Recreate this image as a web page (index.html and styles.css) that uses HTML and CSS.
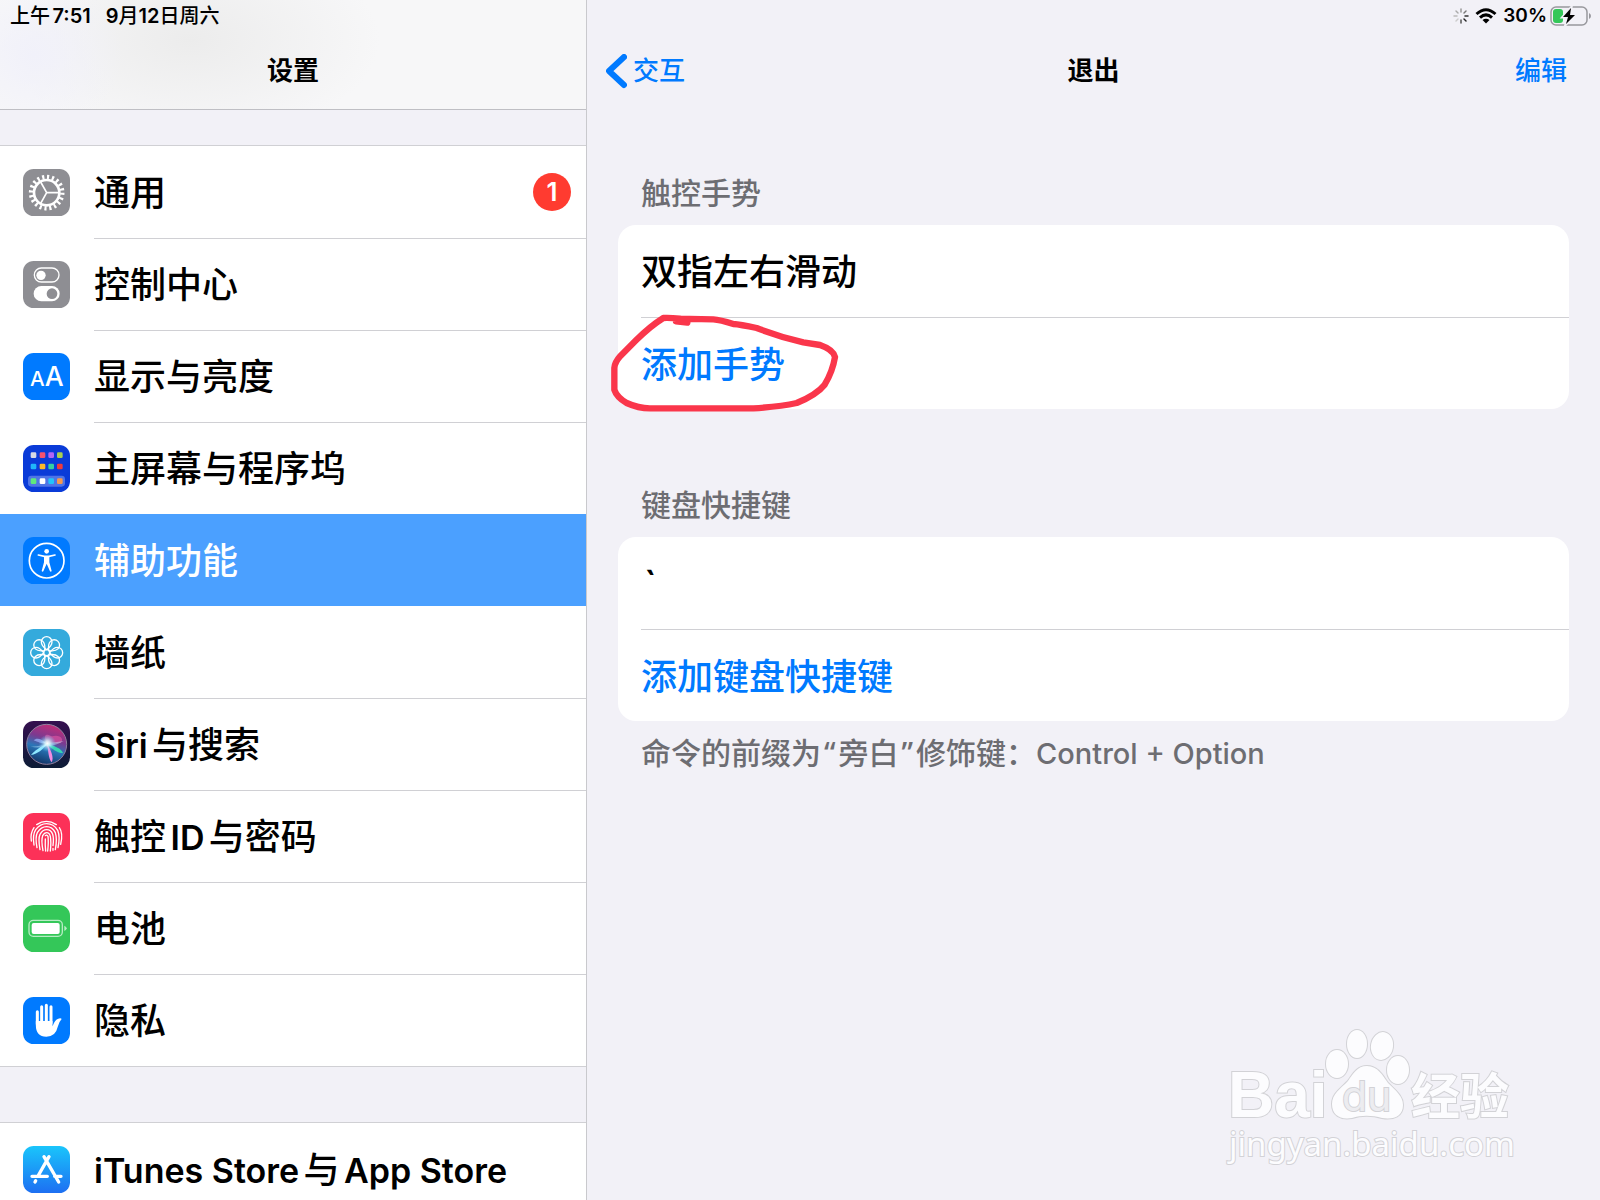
FILE: index.html
```html
<!DOCTYPE html>
<html lang="zh-CN">
<head>
<meta charset="utf-8">
<title>设置</title>
<meta name="viewport" content="width=device-width, initial-scale=1">
<link rel="stylesheet" href="styles.css">
</head>
<body>
<div class="app">
  <aside class="sidebar">
    <header class="sidebar-header">
      <div class="status"><span>上午<b>7:51</b></span><span class="date"><b>9</b>月<b>12</b>日周六</span></div>
      <h1 class="bar-title">设置</h1>
    </header>
    <nav class="menu">
      <ul class="menu-group">
        <li><a class="item" href="#general">
          <svg class="icon" viewBox="0 0 141 141"><rect width="141" height="141" rx="32" fill="#8e8e93"/><g fill="none" stroke="#fff"><circle cx="71" cy="71" r="38" stroke-width="8"/><circle cx="71" cy="71" r="47" stroke-width="13" pathLength="200" stroke-dasharray="4.4 5.6"/><path d="M71 71h36M71 71L53 39M71 71L53 103" stroke-width="5"/></g></svg>
          <span class="label">通用</span><span class="badge">1</span></a></li>
        <li><a class="item" href="#control">
          <svg class="icon" viewBox="0 0 141 141"><rect width="141" height="141" rx="32" fill="#8e8e93"/><rect x="34" y="21" width="74" height="42" rx="21" fill="none" stroke="#fff" stroke-width="4"/><circle cx="54" cy="43" r="14" fill="#fff"/><rect x="32" y="75" width="78" height="46" rx="23" fill="#fff"/><circle cx="87" cy="98" r="16" fill="#8e8e93"/></svg>
          <span class="label">控制中心</span></a></li>
        <li><a class="item" href="#display">
          <svg class="icon" viewBox="0 0 141 141"><rect width="141" height="141" rx="32" fill="#007aff"/><text class="glyph" x="21" y="99" font-size="62">A</text><text class="glyph" x="65" y="99" font-size="80">A</text></svg>
          <span class="label">显示与亮度</span></a></li>
        <li><a class="item" href="#home">
          <svg class="icon" viewBox="0 0 141 141"><rect width="141" height="141" rx="32" fill="#0a3bd8"/><rect x="15" y="92" width="111" height="33" rx="10" fill="#4f74e6"/><rect x="23" y="22" width="17" height="17" rx="4" fill="#d5d9e4"/><rect x="50" y="22" width="17" height="17" rx="4" fill="#f6526f"/><rect x="76" y="22" width="17" height="17" rx="4" fill="#b265f5"/><rect x="102" y="22" width="17" height="17" rx="4" fill="#a9d04f"/><rect x="23" y="56" width="17" height="17" rx="4" fill="#1fb6fa"/><rect x="50" y="56" width="17" height="17" rx="4" fill="#fbb92a"/><rect x="76" y="56" width="17" height="17" rx="4" fill="#35cfa0"/><rect x="102" y="56" width="17" height="17" rx="4" fill="#ef3a3c"/><rect x="23" y="100" width="17" height="17" rx="4" fill="#5fe97c"/><rect x="50" y="100" width="17" height="17" rx="4" fill="#fff"/><rect x="76" y="100" width="17" height="17" rx="4" fill="#22c4fb"/><rect x="102" y="100" width="17" height="17" rx="4" fill="#f7994c"/></svg>
          <span class="label">主屏幕与程序坞</span></a></li>
        <li><a class="item selected" href="#accessibility" aria-current="page">
          <svg class="icon" viewBox="0 0 141 141"><rect width="141" height="141" rx="32" fill="#007aff"/><circle cx="71" cy="71" r="52" fill="none" stroke="#fff" stroke-width="5"/><circle cx="71" cy="43" r="7" fill="#fff"/><path d="M46 54L64 58H78L96 54" fill="none" stroke="#fff" stroke-width="5" stroke-linecap="round"/><path d="M63 57H79V76L86 102Q84 106 81 103L71 80L61 103Q58 106 56 102L63 76Z" fill="#fff"/></svg>
          <span class="label">辅助功能</span></a></li>
        <li><a class="item" href="#wallpaper">
          <svg class="icon" viewBox="0 0 141 141"><defs><path id="petal" d="M71 62C60 54 55 46 55 39A16 16 0 0 1 87 39C87 46 82 54 71 62Z"/></defs><rect width="141" height="141" rx="32" fill="#34aadc"/><g fill="none" stroke="#fff" stroke-width="4"><use href="#petal"/><use href="#petal" transform="rotate(45 71 71)"/><use href="#petal" transform="rotate(90 71 71)"/><use href="#petal" transform="rotate(135 71 71)"/><use href="#petal" transform="rotate(180 71 71)"/><use href="#petal" transform="rotate(225 71 71)"/><use href="#petal" transform="rotate(270 71 71)"/><use href="#petal" transform="rotate(315 71 71)"/><circle cx="71" cy="71" r="9"/></g></svg>
          <span class="label">墙纸</span></a></li>
        <li><a class="item" href="#siri">
          <svg class="icon" viewBox="0 0 141 141"><defs><linearGradient id="siriBg" x2="0" y2="1"><stop stop-color="#35104f"/><stop offset="1" stop-color="#0c1c36"/></linearGradient><linearGradient id="siriOrb" x1=".6" y1="0" x2=".3" y2="1"><stop stop-color="#c22c78"/><stop offset=".35" stop-color="#7b3a90"/><stop offset=".6" stop-color="#2a76b8"/><stop offset="1" stop-color="#102f60"/></linearGradient><radialGradient id="siriGlow"><stop stop-color="#fff"/><stop offset=".3" stop-color="#dff" stop-opacity=".8"/><stop offset="1" stop-color="#5cf" stop-opacity="0"/></radialGradient></defs><rect width="141" height="141" rx="32" fill="url(#siriBg)"/><circle cx="71" cy="70" r="60" fill="url(#siriOrb)"/><circle cx="71" cy="70" r="60" fill="none" stroke="#8f7f9e" stroke-width="3"/><path d="M72 68C58 36 72 38 86 46C112 38 126 56 112 66Z" fill="#ee5aa5" opacity=".55"/><path d="M72 68C92 74 116 82 120 96C104 96 86 84 72 68Z" fill="#35e6b0" opacity=".85"/><path d="M72 68C84 88 94 110 86 124C76 112 76 88 72 68Z" fill="#f28be0"/><path d="M72 68C56 74 30 92 24 102C44 98 62 84 72 68Z" fill="#8fe8ff"/><path d="M72 68C52 50 40 50 32 58C44 64 58 68 72 68Z" fill="#9db6ff" opacity=".7"/><path d="M22 76Q50 78 72 66Q96 64 122 60Q96 76 72 74Q46 84 22 76Z" fill="#c7eaff" opacity=".45"/><circle cx="73" cy="67" r="26" fill="url(#siriGlow)"/></svg>
          <span class="label"><span class="latin">Siri</span>与搜索</span></a></li>
        <li><a class="item" href="#touchid">
          <svg class="icon" viewBox="0 0 141 141"><rect width="141" height="141" rx="32" fill="#fc3158"/><g fill="none" stroke="#fff" stroke-width="4" stroke-linecap="round"><path d="M41 35Q70 15 100 35"/><path d="M25 84Q21 62 33 44M109 44Q121 60 113 94"/><path d="M33 96Q28 66 38 50Q52 32 71 32Q92 32 104 52Q112 72 105 104"/><path d="M42 104Q36 72 43 59Q54 41 71 41Q88 41 97 59Q103 78 97 110"/><path d="M51 110Q45 76 51 64Q59 50 71 50Q84 50 89 64Q93 76 90 98"/><path d="M60 113Q54 80 59 68Q64 59 71 59Q79 59 82 70Q85 86 82 114"/><path d="M67 68Q71 64 75 70Q77 86 74 114M67 78Q66 96 68 114M90 106V112"/></g></svg>
          <span class="label">触控<span class="latin">ID</span>与密码</span></a></li>
        <li><a class="item" href="#battery">
          <svg class="icon" viewBox="0 0 141 141"><rect width="141" height="141" rx="32" fill="#34c759"/><rect x="18" y="46" width="100" height="48" rx="13" fill="none" stroke="#b7ecc4" stroke-width="4"/><rect x="26" y="54" width="84" height="33" rx="6" fill="#fff"/><path d="M124 62Q131 65 131 70T124 78Z" fill="#b7ecc4"/></svg>
          <span class="label">电池</span></a></li>
        <li><a class="item" href="#privacy">
          <svg class="icon" viewBox="0 0 141 141"><rect width="141" height="141" rx="32" fill="#007aff"/><g fill="none" stroke="#fff" stroke-width="9" stroke-linecap="round"><path d="M43 44V82M56 29V78M70 25V78M84 29V78"/></g><path d="M38.500 72H88.500V88Q96 68 104 66Q113 62 116 66Q108 74 104 90Q98 119 70 119Q38.500 119 38.500 84Z" fill="#fff"/></svg>
          <span class="label">隐私</span></a></li>
      </ul>
      <ul class="menu-group">
        <li><a class="item" href="#stores">
          <svg class="icon" viewBox="0 0 141 141"><defs><linearGradient id="store" x2="0" y2="1"><stop stop-color="#1ac5fb"/><stop offset="1" stop-color="#1d6ff2"/></linearGradient></defs><rect width="141" height="141" rx="32" fill="url(#store)"/><g fill="none" stroke="#fff" stroke-width="10" stroke-linecap="round"><path d="M78 32L45 90M38 104L36 108M63 32L107 108M27 91H73M95 91H114"/></g></svg>
          <span class="label"><span class="latin">iTunes Store</span>与<span class="latin">App Store</span></span></a></li>
      </ul>
    </nav>
  </aside>

  <main class="detail">
    <div class="status status-right">
      <svg class="spinner" viewBox="0 0 16 16"><g stroke-width="1.500" stroke-linecap="round"><path d="M8 1v3" stroke="#999"/><path d="M13 3l-2 2" stroke="#777"/><path d="M15 8h-3" stroke="#333"/><path d="M13 13l-2-2" stroke="#222"/><path d="M8 15v-3" stroke="#555"/><path d="M3 13l2-2" stroke="#ccc"/><path d="M1 8h3" stroke="#bbb"/><path d="M3 3l2 2" stroke="#aaa"/></g></svg>
      <svg class="wifi" viewBox="0 0 22 16"><g fill="none" stroke="#000" stroke-width="3"><path d="M1.500 6Q11-2.500 20.500 6"/><path d="M5 9.600Q11 4.200 17 9.600"/></g><path d="M11 15.500L7.500 12Q11 9.400 14.500 12Z"/></svg>
      <span class="charge"><b>30%</b>
      <svg class="power" viewBox="0 0 42 20"><rect x="1" y="1" width="36" height="18" rx="5" fill="none" stroke="#98989d" stroke-width="1.500"/><path d="M39 7Q41 8 41 10T39 13Z" fill="#98989d"/><rect x="3" y="3" width="10" height="14" rx="3" fill="#34c759"/><path d="M21 2L13 11H18L16 18L25 9H20Z" stroke="#f2f1f7" stroke-width="3"/><path d="M21 2L13 11H18L16 18L25 9H20Z"/></svg></span>
    </div>
    <header class="navbar">
      <a class="nav-link back" href="#interaction"><svg class="chevron" viewBox="0 0 21 35"><path d="M18 3L3 17L18 31" fill="none" stroke="#007aff" stroke-width="6" stroke-linecap="round" stroke-linejoin="round"/></svg>交互</a>
      <h2 class="bar-title">退出</h2>
      <button class="nav-link edit" type="button">编辑</button>
    </header>

    <section class="section">
      <h3 class="section-title">触控手势</h3>
      <div class="card">
        <div class="row">双指左右滑动</div>
        <button class="row action" type="button">添加手势</button>
        <svg class="marker" viewBox="60 460 699 300"><path d="M292 489L258 485M270 477Q240 474 220 475Q180 500 138 542L92 588Q74 608 73 625V690Q80 712 110 730Q145 746 180 746H490Q570 741 620 730Q680 705 704 675Q728 635 735 592Q730 570 690 556L640 548Q570 532 500 505Q450 494 430 493Q390 480 370 479L262 477" fill="none" stroke="#fa364b" stroke-width="19" stroke-linecap="round" stroke-linejoin="round"/></svg>
      </div>
    </section>

    <section class="section">
      <h3 class="section-title">键盘快捷键</h3>
      <div class="card">
        <div class="row"><span class="key">`</span></div>
        <button class="row action" type="button">添加键盘快捷键</button>
      </div>
      <p class="footnote">命令的前缀为<span class="quote">“</span>旁白<span class="quote">”</span>修饰键：<span class="keys">Control + Option</span></p>
    </section>

    <svg class="watermark" viewBox="0 0 300 150">
      <g class="mark">
        <text class="mark-latin" x="8" y="97" font-size="64">Bai</text>
        <ellipse cx="117" cy="44" rx="11" ry="14"/><ellipse cx="137" cy="24" rx="10" ry="14"/><ellipse cx="162" cy="26" rx="11" ry="14" transform="rotate(10 162 26)"/><ellipse cx="178" cy="50" rx="11" ry="14"/>
        <path d="M147 46C158 46 163 56 168 63C176 71 183 76 183 85C183 96 174 100 162 98C152 95 141 95 132 98C120 100 112 95 112 84C112 74 120 69 128 61C133 54 137 46 147 46Z"/>
        <text class="mark-du" x="122" y="91" font-size="41">du</text>
        <text class="mark-cjk" x="191" y="94" font-size="49">经验</text>
        <text class="mark-url" x="9" y="136" font-size="33">jingyan.baidu.com</text>
      </g>
    </svg>
  </main>
</div>
</body>
</html>
```

FILE: styles.css
```css
* { box-sizing: border-box; }

body {
  margin: 0;
  background: #f2f1f7;
  color: #000;
  font-family: Inter, "Noto Sans CJK SC", sans-serif;
  font-weight: 500;
  text-autospace: normal;
}

h1, h2, h3, p, ul { margin: 0; padding: 0; }
ul { list-style: none; }
a { color: inherit; text-decoration: none; }
b { font-weight: 600; }

button {
  margin: 0;
  padding: 0;
  border: 0;
  background: none;
  color: inherit;
  font: inherit;
  text-align: left;
}

.app {
  display: grid;
  grid-template-columns: 587px 1fr;
  height: 100vh;
  overflow: hidden;
}

.sidebar {
  overflow: hidden;
  border-right: 1px solid #c9c9cd;
}

.sidebar-header {
  height: 110px;
  border-bottom: 1px solid #bfbfc4;
  background:
    radial-gradient(ellipse 90px 80px at 34px 55px, #f1f1fa, transparent),
    radial-gradient(ellipse 190px 100px at 190px 40px, #ececec, transparent),
    #f7f7f8;
}

.status {
  display: flex;
  gap: 15px;
  height: 32px;
  padding: 0 10px;
  align-items: center;
  font-size: 20px;
  line-height: 32px;
}

.date { text-autospace: no-autospace; }

.bar-title {
  font-size: 26px;
  font-weight: 600;
  line-height: 78px;
  text-align: center;
}

.menu {
  display: grid;
  gap: 55px;
  padding-top: 35px;
}

.menu-group {
  border-top: 1px solid #d0d0d4;
  border-bottom: 1px solid #d0d0d4;
  background: #fff;
}

.item {
  display: flex;
  height: 92px;
  padding-left: 23px;
  gap: 24px;
  align-items: center;
  font-size: 36px;
}

.icon {
  flex: none;
  width: 47px;
  height: 47px;
}

.glyph {
  fill: #fff;
  font-family: Inter, sans-serif;
  font-weight: 500;
}

.label {
  flex: 1;
  padding-top: 2px;
  line-height: 90px;
}

.latin {
  font-size: 34px;
  font-weight: 600;
  line-height: 1;
}

li + li .item {
  background: linear-gradient(#d0d0d4, #d0d0d4) 94px 0 / 100% 1px no-repeat;
}

li .item.selected {
  background: #4ba0ff;
  color: #fff;
}

li:has(.selected) + li .item { background: none; }

.badge {
  width: 38px;
  height: 38px;
  margin-right: 15px;
  border-radius: 50%;
  background: #ff3b30;
  color: #fff;
  font-size: 26px;
  font-weight: 600;
  line-height: 38px;
  text-align: center;
}

.detail {
  position: relative;
  min-width: 0;
}

.status-right {
  justify-content: flex-end;
  gap: 6px;
  padding-right: 8px;
  font-size: 19px;
}

.charge {
  display: flex;
  gap: 3px;
  align-items: center;
}

.spinner { width: 16px; height: 16px; }
.wifi { width: 22px; height: 16px; }
.power { width: 42px; height: 20px; }

.navbar {
  display: grid;
  grid-template-columns: 1fr auto 1fr;
  height: 78px;
  padding: 0 19px;
}

.nav-link {
  height: 78px;
  color: #007aff;
  font-size: 26px;
  line-height: 78px;
}

.back {
  display: flex;
  gap: 6px;
  align-items: center;
}

.chevron { width: 21px; height: 35px; }

.edit {
  margin-right: 14px;
  justify-self: end;
}

.section {
  padding: 60px 31px 0;
}

.section + .section { padding-top: 73px; }

.section-title {
  padding: 0 0 8px 23px;
  color: #6d6d72;
  font-size: 30px;
  font-weight: 500;
  line-height: 47px;
}

.card {
  position: relative;
  border-radius: 18px;
  background: #fff;
}

.row {
  display: block;
  width: 100%;
  height: 92px;
  padding: 3px 0 0 23px;
  font-size: 36px;
  line-height: 88px;
}

.key {
  padding-left: 3px;
  font-weight: 600;
}

.action {
  background: linear-gradient(#d0d0d4, #d0d0d4) 23px 0 / 100% 1px no-repeat;
  color: #007aff;
}

.marker {
  position: absolute;
  top: 88px;
  left: -8px;
  width: 233px;
  height: 100px;
}

.footnote {
  padding: 8px 0 0 23px;
  color: #6d6d72;
  font-size: 30px;
  font-weight: 500;
  line-height: 48px;
}

.quote {
  padding: 0 3px;
  font-family: "Noto Sans", sans-serif;
}

.keys { font-size: 29px; }

.watermark {
  position: absolute;
  right: 80px;
  bottom: 30px;
  width: 300px;
  height: 150px;
}

.mark {
  fill: #fcfcfe;
  stroke: #d2d2d6;
  stroke-width: 2px;
  paint-order: stroke;
}

.mark-latin { font-family: "Liberation Sans", sans-serif; font-weight: 700; }
.mark-du { font-family: Inter, sans-serif; font-weight: 400; fill: #ececf0; }
.mark-cjk { font-family: "Noto Sans CJK SC", sans-serif; font-weight: 700; }
.mark-url { font-family: "Noto Sans", sans-serif; font-weight: 400; }
```
